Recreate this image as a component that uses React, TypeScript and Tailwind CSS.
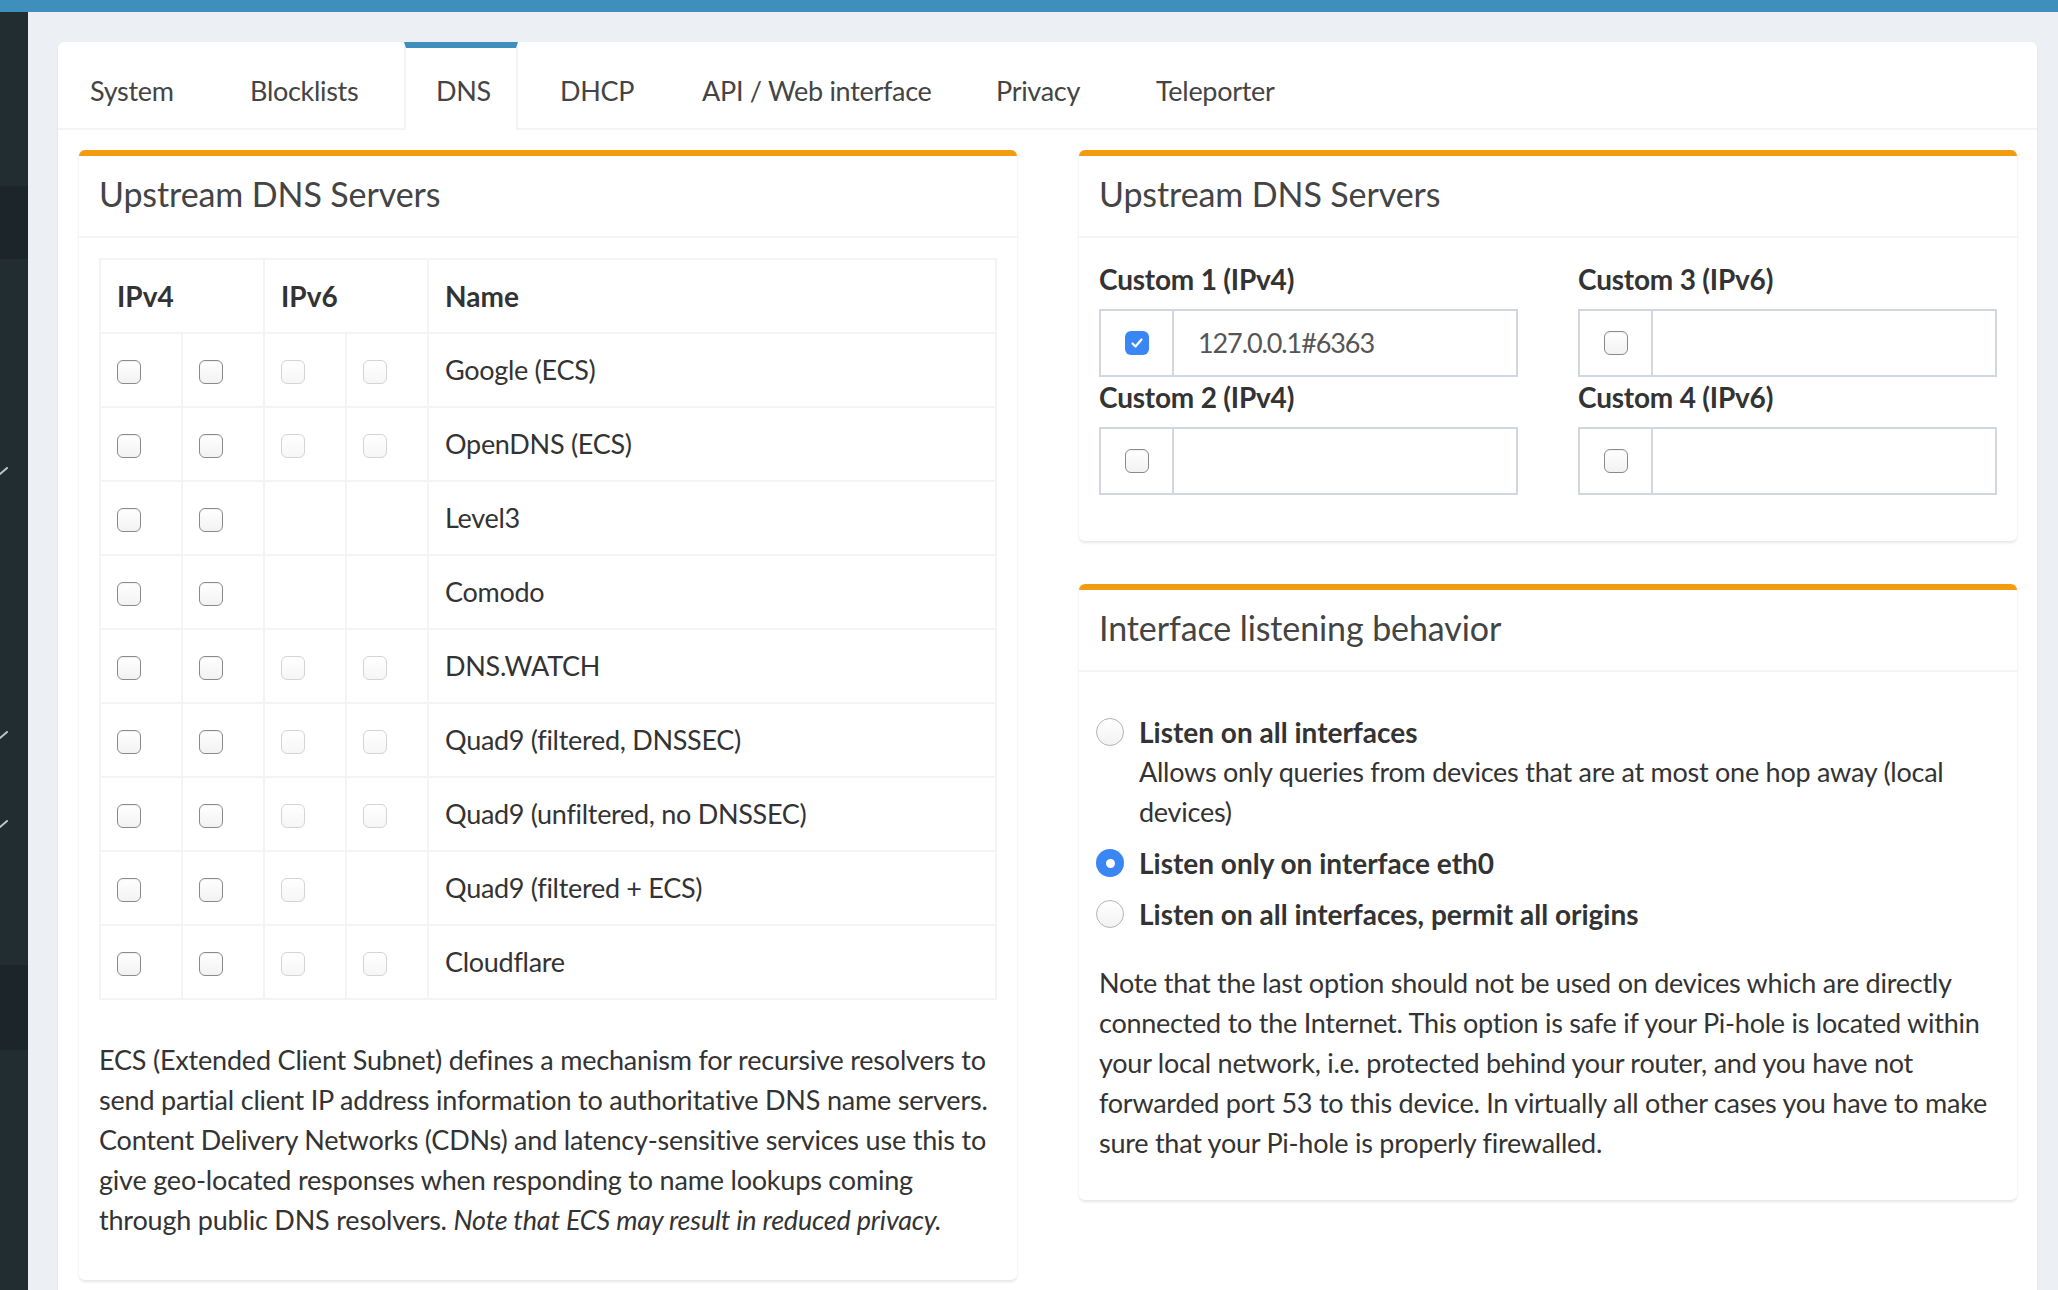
import React from "react";

type Row = { name: string; v6: number };

const rows: Row[] = [
  { name: "Google (ECS)", v6: 2 },
  { name: "OpenDNS (ECS)", v6: 2 },
  { name: "Level3", v6: 0 },
  { name: "Comodo", v6: 0 },
  { name: "DNS.WATCH", v6: 2 },
  { name: "Quad9 (filtered, DNSSEC)", v6: 2 },
  { name: "Quad9 (unfiltered, no DNSSEC)", v6: 2 },
  { name: "Quad9 (filtered + ECS)", v6: 1 },
  { name: "Cloudflare", v6: 2 },
];

const tabs = [
  { label: "System", w: "w-[150px]" },
  { label: "Blocklists", w: "w-[176px]" },
  { label: "DNS", w: "w-[114px]", active: true },
  { label: "DHCP", w: "w-[132px]" },
  { label: "API / Web interface", w: "w-[284px]" },
  { label: "Privacy", w: "w-[150px]" },
  { label: "Teleporter", w: "w-[186px]" },
];

function CheckBox({ light = false, checked = false }: { light?: boolean; checked?: boolean }) {
  if (checked) {
    return (
      <span className="flex h-[24px] w-[24px] items-center justify-center rounded-[6px] bg-[#3b86f5]">
        <svg width="16" height="16" viewBox="0 0 16 16" fill="none">
          <path d="M3.5 8.5l3 3 6-7" stroke="white" strokeWidth="2.2" strokeLinecap="round" strokeLinejoin="round" />
        </svg>
      </span>
    );
  }
  return (
    <span
      className={
        light
          ? "block h-[24px] w-[24px] rounded-[6px] border-[1.5px] border-[#d4d4d4] bg-gradient-to-b from-white to-[#f6f6f6]"
          : "block h-[24px] w-[24px] rounded-[6px] border-[1.5px] border-[#8a8a8a] bg-gradient-to-b from-white to-[#f2f2f2] shadow-[inset_0_1px_1px_rgba(0,0,0,0.06)]"
      }
    />
  );
}

function Radio({ checked = false }: { checked?: boolean }) {
  if (checked) {
    return (
      <span className="flex h-[28px] w-[28px] items-center justify-center rounded-full bg-[#3b86f5]">
        <span className="block h-[9px] w-[9px] rounded-full bg-white" />
      </span>
    );
  }
  return (
    <span className="block h-[28px] w-[28px] rounded-full border-[1.5px] border-[#b4b4b4] bg-gradient-to-b from-white to-[#f2f2f2]" />
  );
}

function SideTick() {
  return (
    <svg width="8" height="8" viewBox="0 0 8 8" className="block">
      <path d="M0 7 L7 1" stroke="#b8c7ce" strokeWidth="2" strokeLinecap="round" />
    </svg>
  );
}

function BoxHeader({ title }: { title: string }) {
  return (
    <div className="border-b-2 border-[#f4f4f4] px-[20px] pt-[20px] pb-[24px]">
      <h3 className="text-[34px] leading-[36px] tracking-[-0.1px] text-[#444]">{title}</h3>
    </div>
  );
}

function CustomField({ label, value, checked }: { label: string; value?: string; checked?: boolean }) {
  return (
    <div>
      <div className="mb-[10px] text-[28px] font-bold leading-[40px] tracking-[-0.2px] text-[#333]">{label}</div>
      <div className="flex h-[68px] border-2 border-[#d2d6de] bg-white">
        <div className="flex w-[73px] shrink-0 items-center justify-center border-r-2 border-[#d2d6de]">
          <CheckBox checked={checked} />
        </div>
        <div className="flex min-w-0 flex-1 items-center px-[24px] text-[27px] tracking-[-1.1px] text-[#555]">{value}</div>
      </div>
    </div>
  );
}

const td = "border-2 border-[#f4f4f4] px-[16px] py-[16px]";
const th = "border-2 border-[#f4f4f4] px-[16px] py-[16px] text-left font-bold";

export default function App() {
  return (
    <div className="flex h-[1290px] w-full flex-col overflow-hidden bg-[#ecf0f5] font-['Lato',sans-serif] text-[#333]">
      <div className="h-[12px] shrink-0 bg-[#3f8fbc]" />
      <div className="flex flex-1 overflow-hidden">
        {/* sidebar */}
        <aside className="flex w-[28px] shrink-0 flex-col bg-[#222d32]">
          <div className="h-[174px] shrink-0" />
          <div className="h-[73px] shrink-0 bg-[#1c2529]" />
          <div className="flex h-[706px] shrink-0 flex-col">
            <div className="mt-[208px]">
              <SideTick />
            </div>
            <div className="mt-[256px]">
              <SideTick />
            </div>
            <div className="mt-[81px]">
              <SideTick />
            </div>
          </div>
          <div className="h-[85px] shrink-0 bg-[#1c2529]" />
          <div className="flex-1" />
        </aside>

        {/* content */}
        <main className="min-w-0 flex-1 pt-[30px] pl-[30px] pr-[21px]">
          <div className="rounded-[6px] bg-white shadow-[0_1px_2px_rgba(0,0,0,0.1)]">
            {/* tabs */}
            <div className="flex border-b-2 border-[#f4f4f4]">
              {tabs.map((t) =>
                t.active ? (
                  <div
                    key={t.label}
                    className={`${t.w} relative z-10 -mb-[2px] mr-[10px] flex h-[88px] shrink-0 items-center whitespace-nowrap border-x-2 border-t-[6px] border-x-[#f4f4f4] border-t-[#3f8fbc] bg-white pt-[3px] pl-[30px] text-[27px] leading-[40px] tracking-[-0.3px] text-[#444]`}
                  >
                    {t.label}
                  </div>
                ) : (
                  <div
                    key={t.label}
                    className={`${t.w} mr-[10px] flex h-[86px] shrink-0 items-center whitespace-nowrap border-t-[6px] border-transparent pt-[5px] pl-[32px] text-[27px] leading-[40px] tracking-[-0.3px] text-[#444]`}
                  >
                    {t.label}
                  </div>
                )
              )}
            </div>

            {/* tab content */}
            <div className="flex gap-[62px] p-[20px] pl-[21px]">
              {/* left box */}
              <section className="min-w-0 flex-1 rounded-[6px] border-t-[6px] border-[#f39c12] bg-white shadow-[0_2px_3px_rgba(0,0,0,0.1)]">
                <BoxHeader title="Upstream DNS Servers" />
                <div className="p-[20px]">
                  <table className="mb-[40px] w-full table-fixed border-collapse border-2 border-[#f4f4f4] text-[28px] leading-[40px]">
                    <colgroup>
                      <col className="w-[82px]" />
                      <col className="w-[82px]" />
                      <col className="w-[82px]" />
                      <col className="w-[82px]" />
                      <col />
                    </colgroup>
                    <thead>
                      <tr>
                        <th colSpan={2} className={th}>
                          IPv4
                        </th>
                        <th colSpan={2} className={th}>
                          IPv6
                        </th>
                        <th className={th}>Name</th>
                      </tr>
                    </thead>
                    <tbody>
                      {rows.map((r) => (
                        <tr key={r.name}>
                          <td className={td}>
                            <div className="flex h-[40px] items-center pt-[3px]">
                              <CheckBox />
                            </div>
                          </td>
                          <td className={td}>
                            <div className="flex h-[40px] items-center pt-[3px]">
                              <CheckBox />
                            </div>
                          </td>
                          <td className={td}>
                            <div className="flex h-[40px] items-center pt-[3px]">{r.v6 >= 1 && <CheckBox light />}</div>
                          </td>
                          <td className={td}>
                            <div className="flex h-[40px] items-center pt-[3px]">{r.v6 >= 2 && <CheckBox light />}</div>
                          </td>
                          <td className={`${td} whitespace-nowrap text-[27px] tracking-[-0.3px]`}>{r.name}</td>
                        </tr>
                      ))}
                    </tbody>
                  </table>
                  <p className="mb-[20px] whitespace-nowrap text-[27px] leading-[40px] tracking-[-0.2px]">
                    ECS (Extended Client Subnet) defines a mechanism for recursive resolvers to
                    <br />
                    send partial client IP address information to authoritative DNS name servers.
                    <br />
                    Content Delivery Networks (CDNs) and latency-sensitive services use this to
                    <br />
                    give geo-located responses when responding to name lookups coming
                    <br />
                    through public DNS resolvers. <em>Note that ECS may result in reduced privacy.</em>
                  </p>
                </div>
              </section>

              {/* right column */}
              <div className="flex min-w-0 flex-1 flex-col gap-[43px]">
                <section className="rounded-[6px] border-t-[6px] border-[#f39c12] bg-white shadow-[0_2px_3px_rgba(0,0,0,0.1)]">
                  <BoxHeader title="Upstream DNS Servers" />
                  <div className="grid grid-cols-2 gap-x-[60px] px-[20px] pt-[21px] pb-[46px]">
                    <div className="flex min-w-0 flex-col">
                      <CustomField label="Custom 1 (IPv4)" value="127.0.0.1#6363" checked />
                      <CustomField label="Custom 2 (IPv4)" />
                    </div>
                    <div className="flex min-w-0 flex-col">
                      <CustomField label="Custom 3 (IPv6)" />
                      <CustomField label="Custom 4 (IPv6)" />
                    </div>
                  </div>
                </section>

                <section className="rounded-[6px] border-t-[6px] border-[#f39c12] bg-white shadow-[0_2px_3px_rgba(0,0,0,0.1)]">
                  <BoxHeader title="Interface listening behavior" />
                  <div className="px-[20px] pt-[40px] pb-[37px] text-[27px] leading-[40px] tracking-[-0.25px]">
                    <div className="flex">
                      <div className="w-[40px] shrink-0 pt-[6px]">
                        <div className="-ml-[3px]">
                          <Radio />
                        </div>
                      </div>
                      <div>
                        <div className="text-[28px] font-bold tracking-[0px]">Listen on all interfaces</div>
                        <div className="whitespace-nowrap">
                          Allows only queries from devices that are at most one hop away (local
                          <br />
                          devices)
                        </div>
                      </div>
                    </div>
                    <div className="mt-[11px] flex">
                      <div className="w-[40px] shrink-0 pt-[6px]">
                        <div className="-ml-[3px]">
                          <Radio checked />
                        </div>
                      </div>
                      <div className="text-[28px] font-bold tracking-[0px]">Listen only on interface eth0</div>
                    </div>
                    <div className="mt-[11px] flex">
                      <div className="w-[40px] shrink-0 pt-[6px]">
                        <div className="-ml-[3px]">
                          <Radio />
                        </div>
                      </div>
                      <div className="text-[28px] font-bold tracking-[0px]">Listen on all interfaces, permit all origins</div>
                    </div>
                    <p className="mt-[29px] whitespace-nowrap">
                      Note that the last option should not be used on devices which are directly
                      <br />
                      connected to the Internet. This option is safe if your Pi-hole is located within
                      <br />
                      your local network, i.e. protected behind your router, and you have not
                      <br />
                      forwarded port 53 to this device. In virtually all other cases you have to make
                      <br />
                      sure that your Pi-hole is properly firewalled.
                    </p>
                  </div>
                </section>
              </div>
            </div>
          </div>
        </main>
      </div>
    </div>
  );
}
